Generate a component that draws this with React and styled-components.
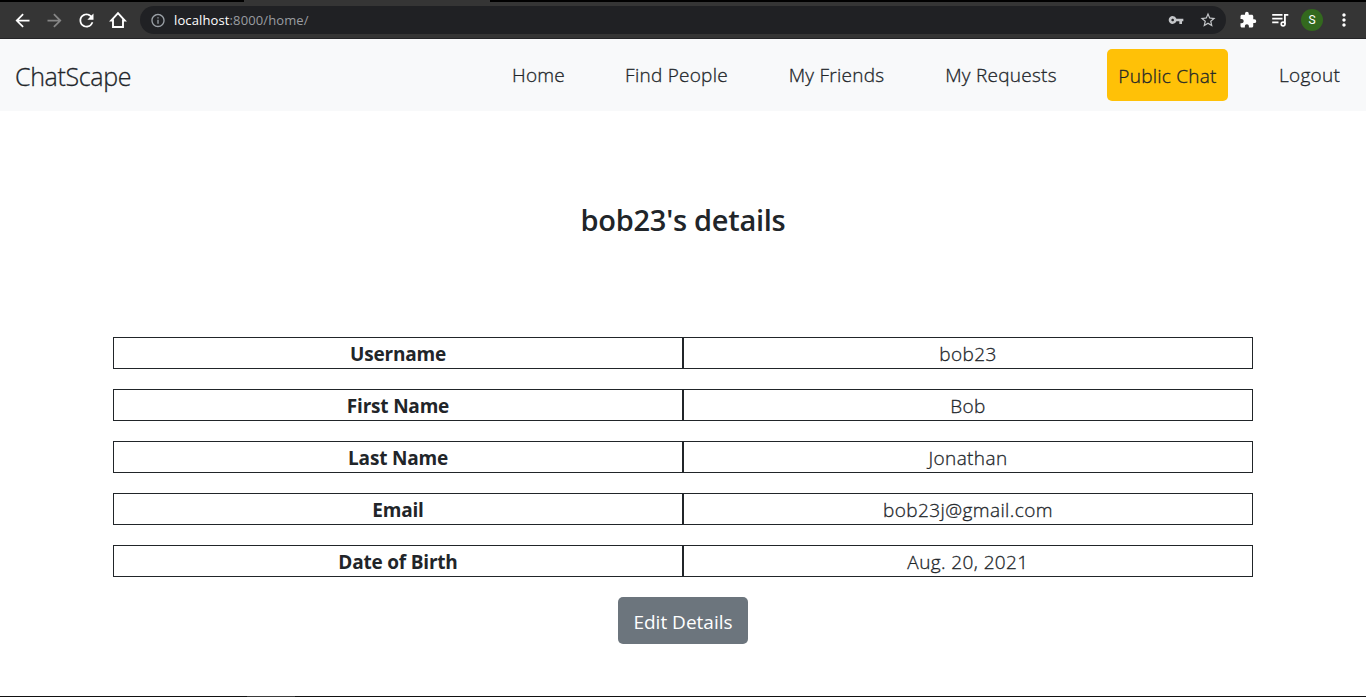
import React from "react";
import styled, { createGlobalStyle } from "styled-components";
import {
  MdArrowBack,
  MdArrowForward,
  MdRefresh,
  MdInfoOutline,
  MdVpnKey,
  MdStarBorder,
  MdExtension,
  MdMoreVert,
} from "react-icons/md";

const GlobalStyle = createGlobalStyle`
  *, *::before, *::after { box-sizing: border-box; }
  body {
    margin: 0;
    background: #fff;
    color: #212529;
    font-family: "Open Sans", "Noto Sans", sans-serif;
    overflow: hidden;
  }
`;

const Page = styled.div`
  display: flex;
  flex-direction: column;
  height: 697px;
`;

const TabStrip = styled.div`
  height: 2px;
  flex: none;
  background: #000;
  padding-left: 244px;
`;

const ActiveTab = styled.div`
  width: 246px;
  height: 2px;
  background: #353535;
`;

const BrowserBar = styled.div`
  display: flex;
  align-items: center;
  flex: none;
  height: 37px;
  padding: 0 12px;
  background: #353535;
  border-bottom: 1px solid #242427;
`;

const BarIcon = styled.span`
  display: flex;
  align-items: center;
  justify-content: center;
  flex: none;
  width: ${(p) => p.$w || 32}px;
  color: ${(p) => p.$color || "#fff"};
  svg { display: block; }
`;

const NavIcons = styled.div`
  display: flex;
  width: 128px;
  margin-left: -6px;
`;

const AddressBar = styled.div`
  display: flex;
  align-items: center;
  flex: 1;
  height: 28px;
  margin-left: 6px;
  padding: 0 2px 0 10px;
  border-radius: 14px;
  background: #202124;
`;

const Url = styled.span`
  flex: 1;
  margin-left: 8px;
  font: 400 13px/18px "Open Sans", sans-serif;
  letter-spacing: 0.12px;
  color: #9a9da1;
  b { font-weight: 400; color: #fff; }
`;

const Actions = styled.div`
  display: flex;
  align-items: center;
  margin: 0 -6px 0 6px;
`;

const Avatar = styled.span`
  display: flex;
  align-items: center;
  justify-content: center;
  width: 22px;
  height: 22px;
  border-radius: 50%;
  background: #33691e;
  color: #fff;
  font: 400 12px/22px Roboto, sans-serif;
`;

const Navbar = styled.nav`
  display: flex;
  justify-content: space-between;
  flex: none;
  height: 72px;
  padding: 10px 15px;
  background: #f8f9fa;
`;

const Brand = styled.a`
  font-size: 25px;
  font-weight: 300;
  line-height: 54px;
  letter-spacing: -0.35px;
  -webkit-text-stroke: 0.3px currentColor;
`;

const NavList = styled.div`
  display: flex;
  align-items: flex-start;
  gap: 40px;
`;

const NavLink = styled.a`
  width: ${(p) => p.$w}px;
  text-align: center;
  white-space: nowrap;
  font-size: 19px;
  font-weight: 300;
  line-height: 52px;
  letter-spacing: 0.25px;
  -webkit-text-stroke: 0.3px currentColor;
`;

const ChatButton = styled(NavLink)`
  height: 52px;
  border-radius: 5px;
  background: #ffc107;
  line-height: 54px;
`;

const Main = styled.main`
  display: flex;
  flex-direction: column;
  align-items: center;
  flex: 1;
  padding-top: 90px;
`;

const Title = styled.h1`
  margin: 0 0 98px;
  font-size: 29px;
  font-weight: 600;
  line-height: 38px;
  letter-spacing: -0.27px;
`;

const Details = styled.div`
  display: flex;
  flex-direction: column;
  gap: 20px;
  width: 1140px;
`;

const Row = styled.div`
  display: grid;
  grid-template-columns: 1fr 1fr;
`;

const Cell = styled.div`
  height: 32px;
  border: 1px solid #212529;
  text-align: center;
  font-size: 19px;
  line-height: 32px;
  font-weight: ${(p) => (p.$head ? 700 : 300)};
  letter-spacing: ${(p) => (p.$head ? -0.2 : 0.4)}px;
  -webkit-text-stroke: ${(p) => (p.$head ? 0 : 0.3)}px currentColor;
`;

const EditButton = styled.button`
  width: 130px;
  height: 47px;
  margin-top: 20px;
  padding: 2px 0 0;
  border: 0;
  border-radius: 5px;
  background: #6c757d;
  color: #fff;
  font: 400 19px/28px "Open Sans", sans-serif;
  white-space: nowrap;
`;

const Taskbar = styled.div`
  flex: none;
  height: 1px;
  background: #111;
  padding-left: 247px;
`;

const TaskbarItem = styled.div`
  width: 48px;
  height: 1px;
  background: #3a3a3a;
`;

const HomeIcon = () => (
  <svg width="20" height="20" viewBox="0 0 20 20" fill="none" stroke="currentColor" strokeWidth="1.9">
    <path d="M10 3.2 3.2 10.5H5V17h10v-6.5h1.8z" />
  </svg>
);

const PlaylistIcon = () => (
  <svg width="20" height="20" viewBox="0 0 20 20">
    <path fill="currentColor" d="M2.2 4h10.3v1.7H2.2zM2.2 7.8h10.3v1.7H2.2zM2.2 11.6h6.3v1.7H2.2zM14 4h4.3v1.8h-2.5v8.4H14z" />
    <circle cx="13.1" cy="14" r="1.9" fill="none" stroke="currentColor" strokeWidth="1.6" />
  </svg>
);

const rows = [
  ["Username", "bob23"],
  ["First Name", "Bob"],
  ["Last Name", "Jonathan"],
  ["Email", "bob23j@gmail.com"],
  ["Date of Birth", "Aug. 20, 2021"],
];

export default function App() {
  return (
    <Page>
      <GlobalStyle />
      <TabStrip><ActiveTab /></TabStrip>
      <BrowserBar>
        <NavIcons>
          <BarIcon><MdArrowBack size={21} /></BarIcon>
          <BarIcon $color="#868686"><MdArrowForward size={21} /></BarIcon>
          <BarIcon><MdRefresh size={21} /></BarIcon>
          <BarIcon><HomeIcon /></BarIcon>
        </NavIcons>
        <AddressBar>
          <BarIcon $w={16} $color="#9aa0a6"><MdInfoOutline size={17} /></BarIcon>
          <Url><b>localhost</b>:8000/home/</Url>
          <BarIcon $color="#c4c6c9"><MdVpnKey size={16} /></BarIcon>
          <BarIcon $color="#c4c6c9"><MdStarBorder size={18} /></BarIcon>
        </AddressBar>
        <Actions>
          <BarIcon><MdExtension size={18} /></BarIcon>
          <BarIcon><PlaylistIcon /></BarIcon>
          <BarIcon><Avatar>S</Avatar></BarIcon>
          <BarIcon><MdMoreVert size={20} /></BarIcon>
        </Actions>
      </BrowserBar>
      <Navbar>
        <Brand>ChatScape</Brand>
        <NavList>
          <NavLink $w={73}>Home</NavLink>
          <NavLink $w={123}>Find People</NavLink>
          <NavLink $w={117}>My Friends</NavLink>
          <NavLink $w={132}>My Requests</NavLink>
          <ChatButton $w={121}>Public Chat</ChatButton>
          <NavLink $w={83}>Logout</NavLink>
        </NavList>
      </Navbar>
      <Main>
        <Title>bob23's details</Title>
        <Details>
          {rows.map(([label, value]) => (
            <Row key={label}>
              <Cell $head>{label}</Cell>
              <Cell>{value}</Cell>
            </Row>
          ))}
        </Details>
        <EditButton>Edit Details</EditButton>
      </Main>
      <Taskbar><TaskbarItem /></Taskbar>
    </Page>
  );
}
